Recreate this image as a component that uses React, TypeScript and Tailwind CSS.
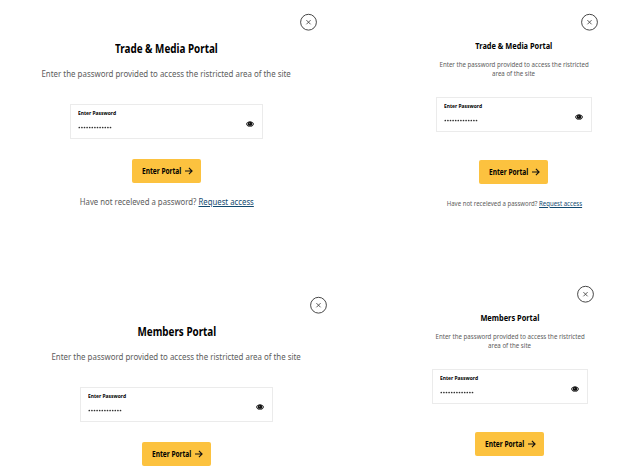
import type { ReactNode } from "react";

type Size = "desktop" | "mobile";

function Squeeze({ children, bold, left, tight }: { children: ReactNode; bold?: boolean; left?: boolean; tight?: boolean }) {
  const scale = bold ? "scale-x-[0.822]" : tight ? "scale-x-[0.863]" : "scale-x-[0.877]";
  return (
    <span className={`block whitespace-nowrap ${left ? "origin-left" : "origin-center"} ${scale}`}>
      {children}
    </span>
  );
}

function CloseButton() {
  return (
    <button aria-label="Close" className="block size-[17px]">
      <svg viewBox="0 0 17 17" className="size-[17px] overflow-visible" fill="none" stroke="#333">
        <circle cx="8.5" cy="8.2" r="7.9" strokeWidth="0.9" />
        <path d="M6.400 6.100l4.200 4.200M10.600 6.100l-4.200 4.200" strokeWidth="0.8" />
      </svg>
    </button>
  );
}

function EyeIcon() {
  return (
    <svg viewBox="0 0 16 12" className="h-[6px] w-[8px]">
      <path d="M0 6C2 2 5 .4 8 .4S14 2 16 6c-2 4-5 5.600-8 5.600S2 10 0 6z" fill="#111" />
      <path d="M2 6c.8-1.500 1.800-2.500 2.800-3.100a4.400 4.400 0 0 0 0 6.200C3.800 8.500 2.800 7.500 2 6zM14 6c-.8-1.500-1.800-2.500-2.800-3.100a4.400 4.400 0 0 1 0 6.200C12.200 8.500 13.200 7.500 14 6z" fill="#fff" />
      <path d="M4 9.500Q8 12.500 12 9.500L11 8.800Q8 10.600 5 8.800z" fill="#fff" opacity="0.6" />
      <circle cx="7" cy="4.300" r="0.800" fill="#fff" />
    </svg>
  );
}

function PasswordField() {
  return (
    <div className="flex h-[35px] w-full items-center justify-between border border-[#ebebeb] pl-[7px] pr-[8px]">
      <div className="h-full">
        <div className="mt-[4px] h-2 text-[6px] leading-[8px] font-bold text-black">
          <Squeeze bold left>Enter Password</Squeeze>
        </div>
        <svg viewBox="0 0 34 3" className="mt-[9px] h-[3px] w-[34px]" fill="#333">
          {Array.from({ length: 13 }, (_, i) => (
            <circle key={i} cx={1.3 + i * 2.6} cy="1.500" r="0.85" />
          ))}
        </svg>
      </div>
      <div className="pt-[5px]">
        <EyeIcon />
      </div>
    </div>
  );
}

function EnterButton() {
  return (
    <button className="flex h-6 w-[69px] items-center rounded-[2px] bg-[#fcc23f] pl-[10px] text-[8px] leading-[12px] font-bold text-black">
      <span className="w-[43px]">
        <Squeeze bold left>Enter Portal</Squeeze>
      </span>
      <svg viewBox="0 0 8 8" className="size-[8px]" fill="none" stroke="#111" strokeWidth="1.100">
        <path d="M0 4h7M3.900.8L7.100 4 3.900 7.200" />
      </svg>
    </button>
  );
}

function Portal({ title, size, footnote }: { title: string; size: Size; footnote?: boolean }) {
  const desktop = size === "desktop";
  return (
    <section className={`flex flex-col items-center ${desktop ? "w-[301px]" : "w-[168px]"}`}>
      <div className="flex w-full justify-end">
        <CloseButton />
      </div>
      <h2
        className={`font-bold text-black ${
          desktop ? "mt-[10px] text-[12px] leading-[16px]" : "mt-[9px] text-[9px] leading-[12px]"
        }`}
      >
        <Squeeze bold>{title}</Squeeze>
      </h2>
      {desktop ? (
        <p className="mt-[11px] text-[9px] leading-[12px]">
          <Squeeze>Enter the password provided to access the ristricted area of the site</Squeeze>
        </p>
      ) : (
        <p className="mt-[8px] flex flex-col items-center text-[7px] leading-[9px]">
          <Squeeze>Enter the password provided to access the ristricted</Squeeze>
          <Squeeze>area of the site</Squeeze>
        </p>
      )}
      <div className={desktop ? "mt-[24px] w-[193px]" : "mt-[19px] w-[156px]"}>
        <PasswordField />
      </div>
      <div className={desktop ? "mt-[20px]" : "mt-[28px] w-[70px]"}>
        <EnterButton />
      </div>
      {footnote && (
        <p className={desktop ? "mt-[13px] text-[9px] leading-[12px]" : "mt-[15px] text-[7px] leading-[9px]"}>
          <Squeeze tight>
            Have not receleved a password?{" "}
            <a className="text-[#124a70] underline decoration-[0.7px] underline-offset-[1px]">Request access</a>
          </Squeeze>
        </p>
      )}
    </section>
  );
}

export default function App() {
  return (
    <main className="flex h-[474px] w-[628px] overflow-hidden bg-white font-['Noto_Sans',sans-serif] text-[#5c5c5c]">
      <div className="w-[426px] shrink-0">
        <div className="h-[283px] pt-[14px] pl-[16px]">
          <Portal title="Trade & Media Portal" size="desktop" footnote />
        </div>
        <div className="pt-[14px] pl-[26px]">
          <Portal title="Members Portal" size="desktop" />
        </div>
      </div>
      <div className="w-[202px] shrink-0">
        <div className="h-[272px] pt-[14px] pl-[4px]">
          <Portal title="Trade & Media Portal" size="mobile" footnote />
        </div>
        <div className="pt-[14px]">
          <Portal title="Members Portal" size="mobile" />
        </div>
      </div>
    </main>
  );
}
